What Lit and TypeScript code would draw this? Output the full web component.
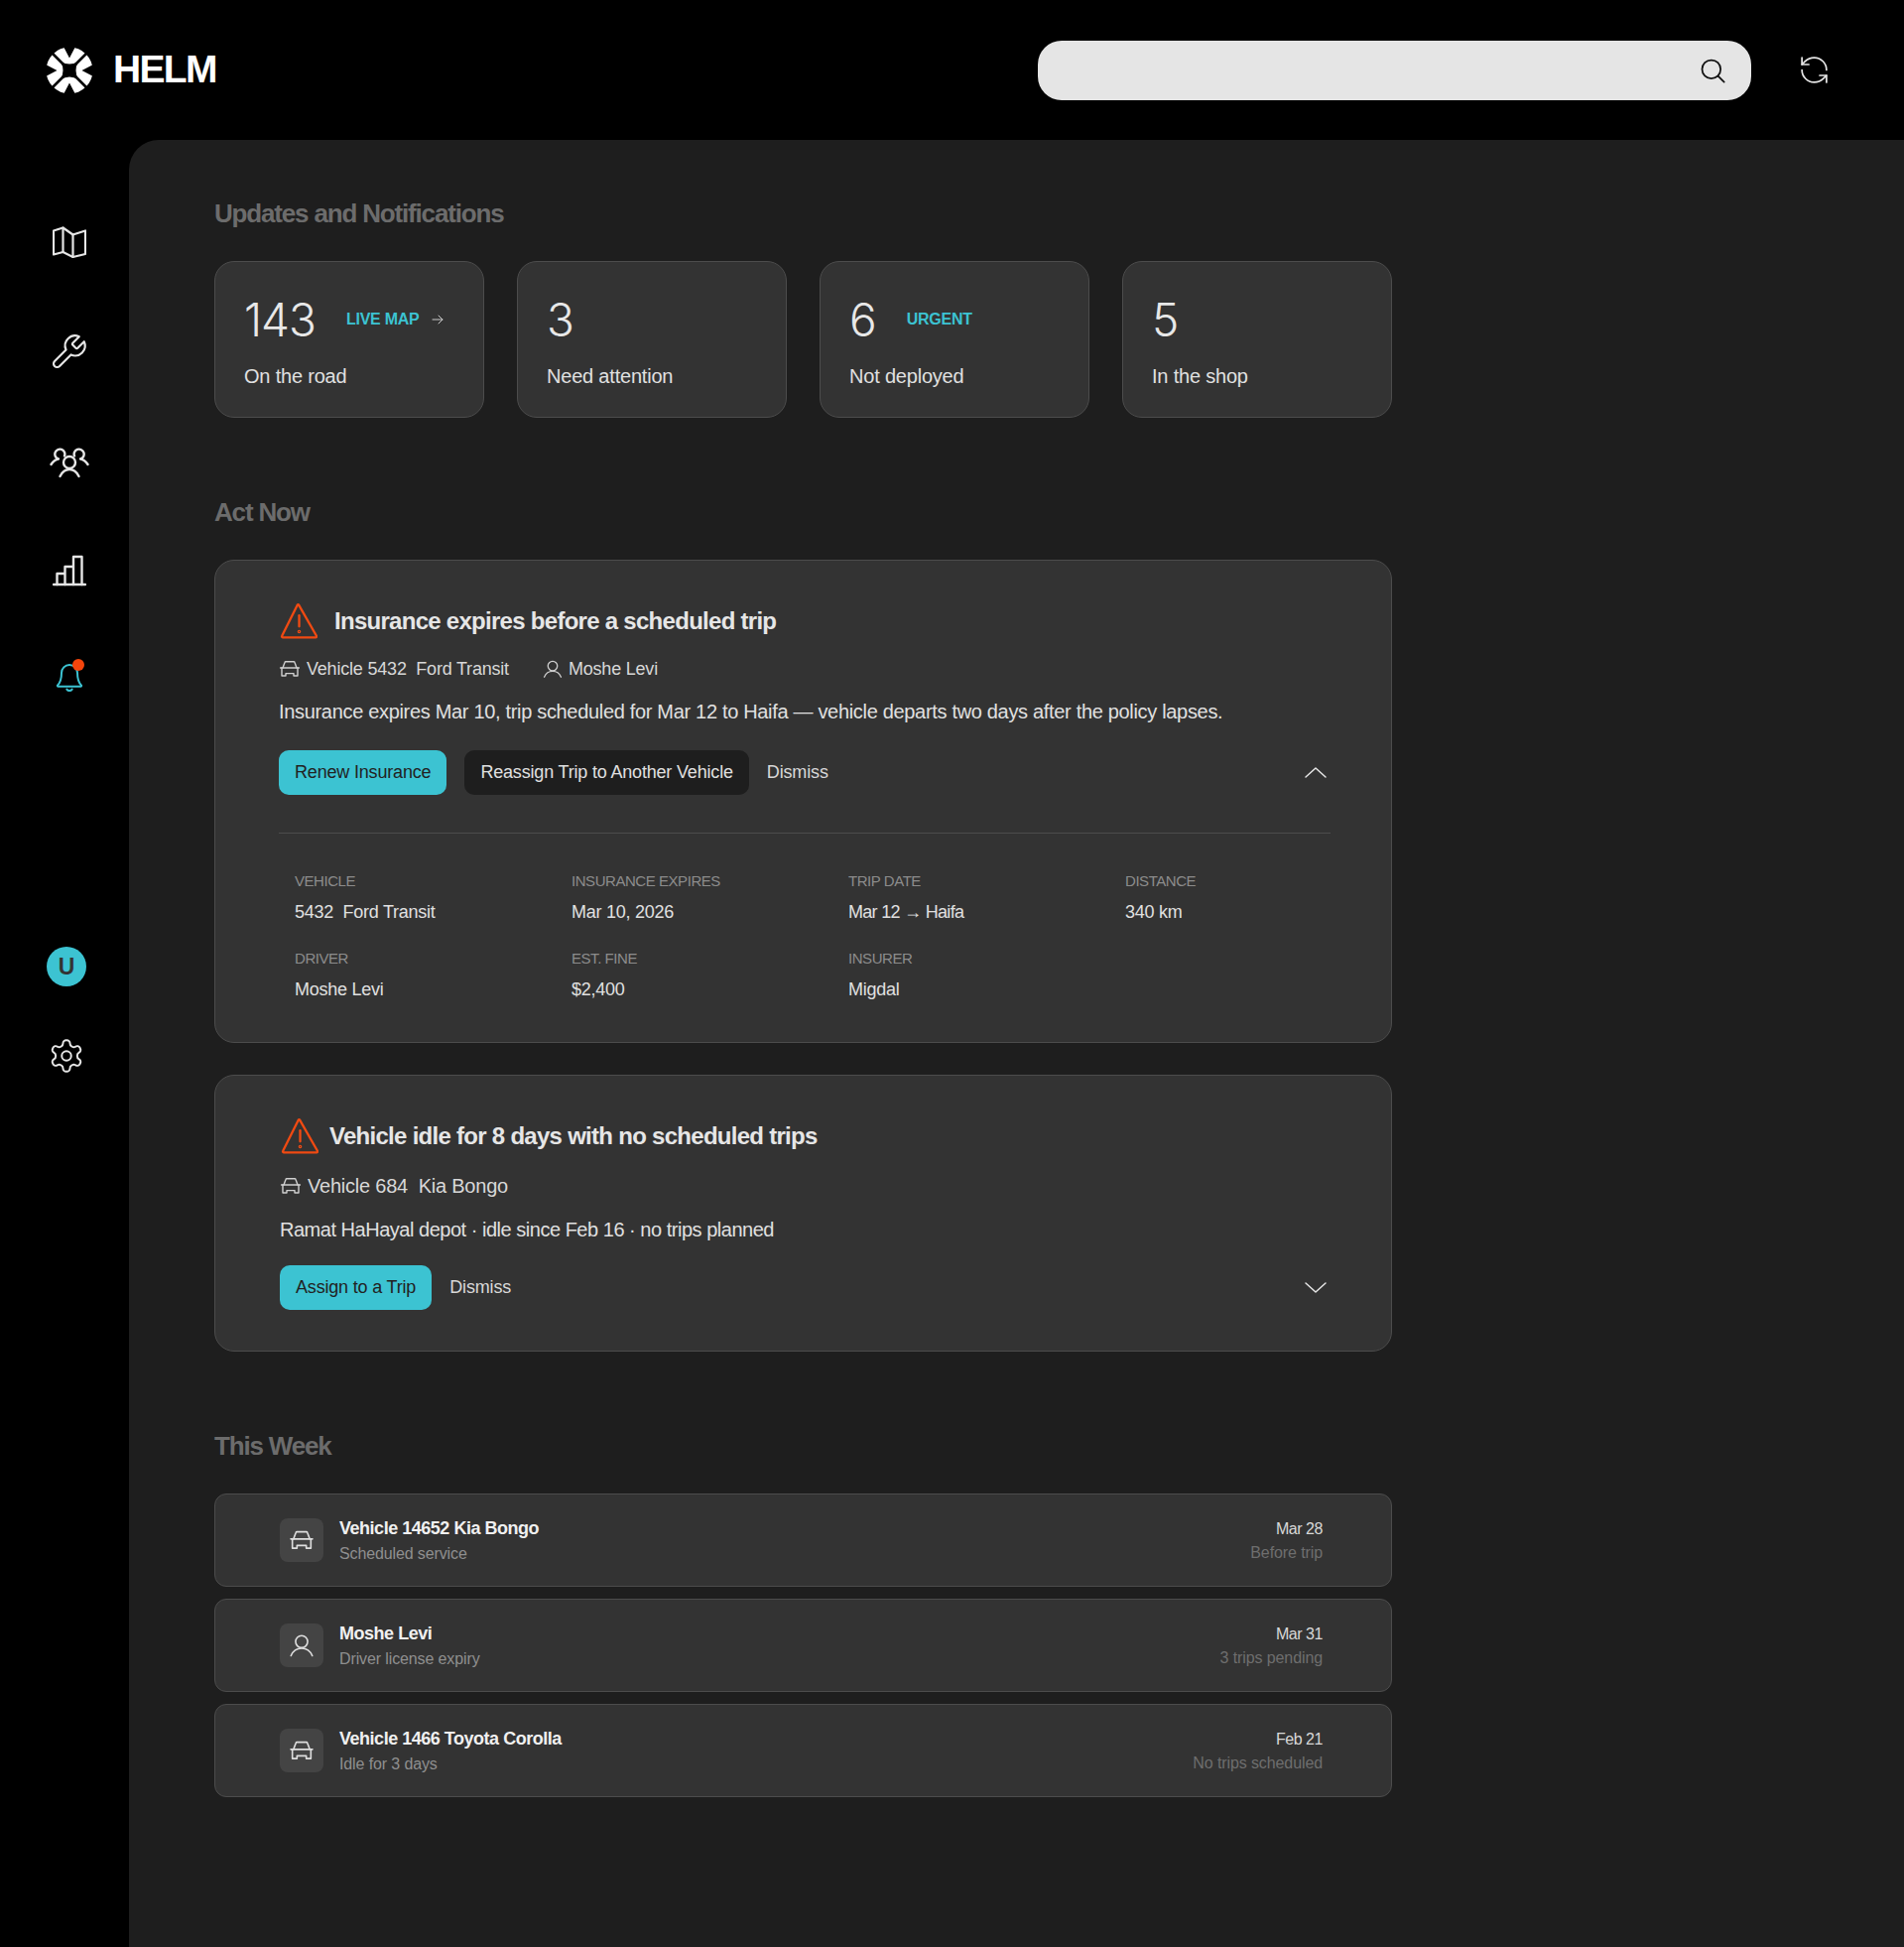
import { LitElement, html, css, svg } from "lit";
import { customElement } from "lit/decorators.js";

const ic = (size: number, vb: number, body: unknown, cls = "", sw = 1.5) =>
  html`<svg class=${cls} width=${size} height=${size} viewBox="0 0 ${vb} ${vb}" fill="none" stroke="currentColor" stroke-width=${sw} stroke-linecap="round" stroke-linejoin="round">${body}</svg>`;

const carP = svg`<path d="M5 11 7 5.5Q7.2 4.8 8 4.8H16Q16.8 4.8 17 5.5L19 11"/><path d="M2.6 11H21.4"/><path d="M4 11V19H8V16.6H16V19H20V11"/>`;
const userP = svg`<circle cx="12" cy="8.8" r="5.2"/><path d="M2.8 21C4.5 17 8 14.6 12 14.6S19.5 17 21.2 21"/>`;
const warnP = svg`<path d="M18 2.2 35 32a1 1 0 0 1-.9 1.5H3a1 1 0 0 1-.9-1.5L17 2.2a.6.6 0 0 1 1 0Z"/><path d="M18.5 12.5V23"/><circle cx="18.5" cy="28" r=".6"/>`;

const stats = [
  { n: "143", l: "On the road", tag: "LIVE MAP", arrow: true },
  { n: "3", l: "Need attention" },
  { n: "6", l: "Not deployed", tag: "URGENT" },
  { n: "5", l: "In the shop" },
];
const details = [
  ["VEHICLE", "5432\u00a0 Ford Transit"],
  ["INSURANCE EXPIRES", "Mar 10, 2026"],
  ["TRIP DATE", "Mar 12 \u2192 Haifa", "tight"],
  ["DISTANCE", "340 km"],
  ["DRIVER", "Moshe Levi"],
  ["EST. FINE", "$2,400"],
  ["INSURER", "Migdal"],
];
const week = [
  { i: carP, t: "Vehicle 14652 Kia Bongo", s: "Scheduled service", d: "Mar 28", e: "Before trip" },
  { i: userP, t: "Moshe Levi", s: "Driver license expiry", d: "Mar 31", e: "3 trips pending" },
  { i: carP, t: "Vehicle 1466 Toyota Corolla", s: "Idle for 3 days", d: "Feb 21", e: "No trips scheduled" },
];

@customElement("app-root")
export class AppRoot extends LitElement {
  static styles = css`
    :host { display: block; min-height: 100vh; background: #000; color: #e6e6e6; font-family: "Liberation Sans", Arial, sans-serif; }
    * { box-sizing: border-box; }
    svg { display: block; flex: none; }
    .top { height: 141px; display: flex; align-items: center; padding-left: 46px; }
    .brand { display: flex; align-items: center; gap: 20px; color: #fff; }
    .brand b { font-size: 39px; letter-spacing: -1.7px; line-height: 1; margin-top: -2px; }
    .search { margin-left: auto; width: 719px; height: 60px; border-radius: 24px; background: #e5e5e5; color: #111; display: flex; align-items: center; justify-content: flex-end; padding-right: 25px; }
    .refresh { margin: 0 74px 0 47px; color: #e6e6e6; }
    .body { display: flex; min-height: 1821px; }
    .side { width: 130px; flex: none; padding-top: 82px; color: #e6e6e6; }
    .nav { display: flex; flex-direction: column; gap: 66px; padding-left: 48px; }
    .nav span { width: 44px; height: 44px; display: flex; align-items: center; justify-content: center; position: relative; }
    .nav .wrench svg { margin-left: -2px; }
    .bell { color: #3cc3d2; }
    .bell svg { margin-top: -7px; }
    .dot { position: absolute; width: 12px; height: 12px; border-radius: 50%; background: #f5450c; left: 25px; top: 1px; }
    .foot { margin-top: 247px; padding-left: 47px; display: flex; flex-direction: column; gap: 50px; }
    .avatar { width: 40px; height: 40px; border-radius: 50%; background: #3cc3d2; color: #333; font-weight: 700; font-size: 23px; display: flex; align-items: center; justify-content: center; }
    .gear { margin-left: 1px; margin-top: 1px; }
    .main { flex: 1; background: #1e1e1e; border-top-left-radius: 30px; padding: 55px 0 0 86px; }
    .wrap { width: 1187px; }
    h2 { margin: 0; font-size: 26px; line-height: 38px; font-weight: 700; letter-spacing: -1.17px; color: #6c6c6c; }
    .stats { display: flex; gap: 33px; margin-top: 29px; }
    .stat { width: 272px; height: 158px; background: #333; border: 1px solid #4c4c4c; border-radius: 20px; padding: 30px 0 0 29px; }
    .stat .row { display: flex; align-items: center; gap: 31px; height: 56px; }
    .num { font-family: Inter, sans-serif; font-weight: 300; font-size: 46px; letter-spacing: -1px; color: #e8e8e8; line-height: 56px; }
    .tag { font-size: 16px; font-weight: 700; letter-spacing: -0.25px; color: #3cc3d2; display: flex; align-items: center; gap: 13px; }
    .tag svg { color: #ccc; }
    .stat .lab { margin-top: 15px; font-size: 20px; letter-spacing: -0.2px; line-height: 28px; color: #e0e0e0; }
    h2.act { margin-top: 76px; }
    .card { background: #333; border: 1px solid #4c4c4c; border-radius: 20px; padding: 39px 61px 0 64px; }
    .card.a { margin-top: 29px; height: 487px; }
    .card.b { margin-top: 32px; height: 279px; padding-left: 65px; }
    .head { display: flex; align-items: center; height: 44px; gap: 17px; }
    .warn { color: #f04a12; margin-left: 1px; }
    .head h3 { margin: 0; font-size: 24px; font-weight: 700; letter-spacing: -0.72px; color: #e6e6e6; }
    .b .head { gap: 11px; }
    .meta { display: flex; align-items: center; margin-top: 12px; height: 28px; font-size: 18px; letter-spacing: -0.2px; color: #d8d8d8; gap: 5px; }
    .meta svg { color: #d0d0d0; margin-left: -1px; }
    .meta .u { margin-left: 28px; }
    .desc { margin: 15px 0 0; font-size: 20px; line-height: 28px; letter-spacing: -0.32px; color: #e0e0e0; }
    .b .meta { margin-top: 14px; font-size: 20px; letter-spacing: -0.22px; }
    .b .desc { margin-top: 16px; letter-spacing: -0.48px; }
    .acts { display: flex; align-items: center; gap: 18px; margin-top: 25px; height: 45px; }
    .b .acts { margin-top: 22px; }
    .btn { height: 45px; border-radius: 10px; display: flex; align-items: center; padding: 0 16px; font-size: 18px; letter-spacing: -0.18px; white-space: nowrap; }
    .btn.p { background: #3cc3d2; color: #222; }
    .btn.sec { background: #1e1e1e; color: #e0e0e0; }
    .link { font-size: 18px; letter-spacing: -0.15px; color: #d8d8d8; }
    .chev { margin-left: auto; margin-right: 3px; margin-top: -2px; color: #e6e6e6; }
    hr { border: 0; border-top: 1px solid #4c4c4c; margin: 38px 0 0; }
    .grid { display: grid; grid-template-columns: repeat(4, 279px); padding: 39px 0 0 16px; row-gap: 25px; }
    .grid small { display: block; font-size: 15px; line-height: 18px; letter-spacing: -0.45px; color: #8c8c8c; }
    .grid div div { margin-top: 9px; font-size: 18px; line-height: 26px; letter-spacing: -0.25px; color: #e0e0e0; }
    .grid div div.tight { letter-spacing: -0.7px; }
    h2.week { margin-top: 76px; }
    .rows { display: flex; flex-direction: column; gap: 12px; margin-top: 29px; }
    .row2 { height: 94px; background: #333; border: 1px solid #4c4c4c; border-radius: 12px; display: flex; align-items: center; padding: 0 69px 0 65px; }
    .box { width: 44px; height: 44px; background: #444; border-radius: 8px; display: flex; align-items: center; justify-content: center; color: #ddd; margin-right: 16px; }
    .ttl { font-size: 18px; font-weight: 700; letter-spacing: -0.48px; color: #f0f0f0; line-height: 24px; }
    .sub { font-size: 16px; letter-spacing: -0.12px; color: #8f8f8f; line-height: 22px; margin-top: 3px; }
    .r { margin-left: auto; text-align: right; }
    .r .d { font-size: 16px; letter-spacing: -0.45px; color: #d8d8d8; line-height: 24px; }
    .r .e { font-size: 16px; letter-spacing: -0.1px; color: #6e6e6e; line-height: 22px; margin-top: 1px; }
  `;

  render() {
    return html`
      <div class="top">
        <div class="brand">
          <svg width="48" height="48" viewBox="-24 -24 48 48">
            <circle r="23.5" fill="#fff" />
            <g fill="#000" stroke="none">
              <path d="M-9-9Q0-4 9-9 4 0 9 9 0 4-9 9-4 0-9-9Z" />
              <path d="M-6.5-25 0-12.5 6.5-25ZM-6.5 25 0 12.5 6.5 25ZM-25-6.5-12.5 0-25 6.5ZM25-6.5 12.5 0 25 6.5Z" />
            </g>
            <path d="M-20-20 20 20M20-20-20 20" stroke="#000" stroke-width="2.6" />
          </svg>
          <b>HELM</b>
        </div>
        <div class="search">
          ${ic(28, 24, svg`<circle cx="11" cy="11" r="8"/><path d="M16.8 16.8 22 22"/>`)}
        </div>
        <div class="refresh">
          ${ic(33, 24, svg`<path d="M21 12a9 9 0 0 0-9-9 9.75 9.75 0 0 0-6.74 2.74L3 8"/><path d="M3 3v5h5"/><path d="M3 12a9 9 0 0 0 9 9 9.75 9.75 0 0 0 6.74-2.74L21 16"/><path d="M16 16h5v5"/>`, "", 1.25)}
        </div>
      </div>
      <div class="body">
        <aside class="side">
          <nav class="nav">
            <span>${ic(34, 34, svg`<path d="M1 4.5 10.5 1.5 20.5 8.5 33 4.5V28L20.5 31 10.5 26 1 28.5Z"/><path d="M10.5 1.5V26M20.5 8.5V31"/>`, "", 2.2)}</span>
            <span class="wrench">${ic(40, 24, svg`<path d="M14.7 6.3a1 1 0 0 0 0 1.4l1.6 1.6a1 1 0 0 0 1.4 0l3.77-3.77a6 6 0 0 1-7.94 7.94l-6.91 6.91a2.12 2.12 0 0 1-3-3l6.91-6.91a6 6 0 0 1 7.94-7.94l-3.76 3.76z"/>`, "", 1.3)}</span>
            <span>${ic(40, 40, svg`<circle cx="20" cy="21" r="6"/><path d="M10.5 35C13 30 16.5 28 20 28S27 30 29.5 35"/><path d="M15 14.5A5 5 0 1 0 9 17.5C6 18 3.5 20 1.5 23"/><path d="M25 14.5A5 5 0 1 1 31 17.5C34 18 36.5 20 38.5 23"/>`, "", 2.4)}</span>
            <span>${ic(34, 34, svg`<path d="M1 31H33"/><path d="M4.5 31V20H12.5V31M12.5 31V13H21V31M21 31V3H29.5V31"/>`, "", 2.4)}</span>
            <span class="bell">${ic(32, 24, svg`<path d="M6 9a6 6 0 0 1 12 0c0 6 1.5 8 3 9.5a.5.5 0 0 1-.4.8H3.4a.5.5 0 0 1-.4-.8C4.5 17 6 15 6 9"/><path d="M10 21.5a2.4 2.4 0 0 0 4 0"/>`, "", 1.5)}<i class="dot"></i></span>
          </nav>
          <div class="foot">
            <div class="avatar">U</div>
            <div class="gear">${ic(38, 24, svg`<path d="M12.22 2h-.44a2 2 0 0 0-2 2v.18a2 2 0 0 1-1 1.73l-.43.25a2 2 0 0 1-2 0l-.15-.08a2 2 0 0 0-2.73.73l-.22.38a2 2 0 0 0 .73 2.73l.15.1a2 2 0 0 1 1 1.72v.51a2 2 0 0 1-1 1.74l-.15.09a2 2 0 0 0-.73 2.73l.22.38a2 2 0 0 0 2.73.73l.15-.08a2 2 0 0 1 2 0l.43.25a2 2 0 0 1 1 1.73V20a2 2 0 0 0 2 2h.44a2 2 0 0 0 2-2v-.18a2 2 0 0 1 1-1.73l.43-.25a2 2 0 0 1 2 0l.15.08a2 2 0 0 0 2.73-.73l.22-.39a2 2 0 0 0-.73-2.73l-.15-.08a2 2 0 0 1-1-1.74v-.5a2 2 0 0 1 1-1.74l.15-.09a2 2 0 0 0 .73-2.73l-.22-.38a2 2 0 0 0-2.73-.73l-.15.08a2 2 0 0 1-2 0l-.43-.25a2 2 0 0 1-1-1.73V4a2 2 0 0 0-2-2z"/><circle cx="12" cy="12" r="3"/>`, "", 1.25)}</div>
          </div>
        </aside>
        <main class="main">
          <div class="wrap">
            <h2>Updates and Notifications</h2>
            <div class="stats">
              ${stats.map(
                (s) => html`<div class="stat">
                  <div class="row">
                    <span class="num">${s.n}</span>
                    ${s.tag
                      ? html`<span class="tag">${s.tag}${s.arrow ? ic(12, 12, svg`<path d="M1 6H11M7 2 11 6 7 10"/>`, "", 1) : ""}</span>`
                      : ""}
                  </div>
                  <div class="lab">${s.l}</div>
                </div>`
              )}
            </div>
            <h2 class="act">Act Now</h2>
            <section class="card a">
              <div class="head">
                ${ic(38, 36, warnP, "warn", 2.2)}
                <h3>Insurance expires before a scheduled trip</h3>
              </div>
              <div class="meta">
                ${ic(24, 24, carP, "", 1.4)}<span>Vehicle 5432&nbsp; Ford Transit</span>
                ${ic(22, 24, userP, "u", 1.4)}<span>Moshe Levi</span>
              </div>
              <p class="desc">Insurance expires Mar 10, trip scheduled for Mar 12 to Haifa — vehicle departs two days after the policy lapses.</p>
              <div class="acts">
                <div class="btn p">Renew Insurance</div>
                <div class="btn sec">Reassign Trip to Another Vehicle</div>
                <span class="link">Dismiss</span>
                ${ic(24, 24, svg`<path d="M2 17 12 8 22 17"/>`, "chev", 1.5)}
              </div>
              <hr />
              <div class="grid">
                ${details.map(([k, v, c]) => html`<div><small>${k}</small><div class=${c || ""}>${v}</div></div>`)}
              </div>
            </section>
            <section class="card b">
              <div class="head">
                ${ic(38, 36, warnP, "warn", 2.2)}
                <h3>Vehicle idle for 8 days with no scheduled trips</h3>
              </div>
              <div class="meta">${ic(24, 24, carP, "", 1.4)}<span>Vehicle 684&nbsp; Kia Bongo</span></div>
              <p class="desc">Ramat HaHayal depot · idle since Feb 16 · no trips planned</p>
              <div class="acts">
                <div class="btn p">Assign to a Trip</div>
                <span class="link">Dismiss</span>
                ${ic(24, 24, svg`<path d="M2 8 12 17 22 8"/>`, "chev", 1.5)}
              </div>
            </section>
            <h2 class="week">This Week</h2>
            <div class="rows">
              ${week.map(
                (w) => html`<div class="row2">
                  <div class="box">${ic(28, 24, w.i, "", 1.4)}</div>
                  <div>
                    <div class="ttl">${w.t}</div>
                    <div class="sub">${w.s}</div>
                  </div>
                  <div class="r">
                    <div class="d">${w.d}</div>
                    <div class="e">${w.e}</div>
                  </div>
                </div>`
              )}
            </div>
          </div>
        </main>
      </div>
    `;
  }
}
